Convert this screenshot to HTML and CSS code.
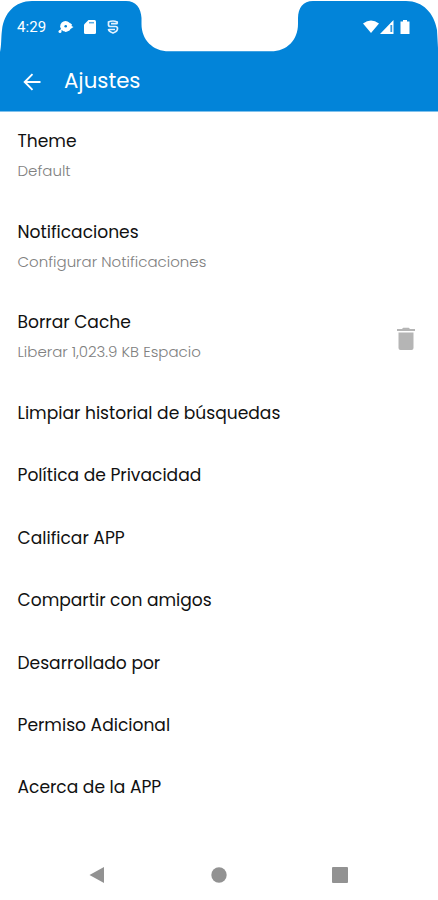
FILE: index.html
```html
<!DOCTYPE html>
<html lang="es">
<head>
<meta charset="utf-8">
<title>Ajustes</title>
<link rel="stylesheet" href="styles.css">
</head>
<body>
<header class="header">
  <svg class="header-shape" viewBox="0 0 438 112" aria-hidden="true"><path fill="#0284d9" d="M0 111.500V52C1.500 46 1 37 2 30C4 13 15 1 32 1H126C136 1 141 8 141.500 18V24C141.500 40 153 51.300 169 51.300H271C287 51.300 298 40 298 24V18C298 8 303 1 313 1H406C423 1 434 13 437 30L438 48V111.500Z"/></svg>
  <div class="status">
    <span class="time">4:29</span>
    <svg class="st-bug" viewBox="0 0 16 14"><path fill="#fff" d="M3 7L12 3 14 4.500 13.500 6 15.500 7 12.500 9 11.500 10.500 7.500 12Z"/><circle cx="7.500" cy="6.300" r="5.300" fill="#fff"/><circle cx="2" cy="11.500" r="1.500" fill="#fff"/><path stroke="#fff" stroke-width="1.500" d="M2 11L4 9"/><circle cx="7.700" cy="6.300" r="1.300" fill="#0284d9"/></svg>
    <svg class="st-card" viewBox="0 0 12 14"><path fill="#fff" d="M4.500 0H10.500Q12 0 12 1.500V12.500Q12 14 10.500 14H1.500Q0 14 0 12.500V4.500Z"/><path stroke="#58ace6" stroke-width="1.500" d="M5 2.700H10"/></svg>
    <svg class="st-s" viewBox="0 0 12 14"><path fill="none" stroke="#e2f2ff" stroke-width="1.700" d="M10.200 3.700V2Q8 1 6 1Q3.500 1 1.500 2V5Q1.500 6.500 3.500 6.500H8.500Q10.500 6.500 10.500 8.500Q10.500 11.500 6 13Q1.500 11.500 1.500 9M4 3.700H10.500M1.500 9.500H8"/></svg>
    <svg class="st-right" viewBox="0 0 48 16"><path fill="#fff" d="M0 4.500Q8-1.500 16 4.500L8 14ZM30.500 1V15H17ZM40 1H44V2.500H46.500V15H37.500V2.500H40Z"/><path stroke="#3199e0" stroke-width="1.800" d="M28.300 6V13"/></svg>
  </div>
  <div class="bar">
    <svg class="back" viewBox="0 0 18 18"><path fill="none" stroke="#fff" stroke-width="1.900" d="M17.500 9H1.800M9.500 1.200L1.700 9L9.500 16.800"/></svg>
    <h1>Ajustes</h1>
  </div>
</header>
<main>
  <section class="row double"><div><h2>Theme</h2><p>Default</p></div></section>
  <section class="row double"><div><h2>Notificaciones</h2><p>Configurar Notificaciones</p></div></section>
  <section class="row double"><div><h2>Borrar Cache</h2><p>Liberar 1,023.9 KB Espacio</p></div>
    <svg class="trash" viewBox="0 0 18 23"><path fill="#b5b5b5" d="M0 2H5L6.200.7H11.800L13 2H18V4H0ZM1.500 5.500H16.500V21Q16.500 23 14.500 23H3.500Q1.500 23 1.500 21Z"/></svg></section>
  <section class="row"><h2>Limpiar historial de búsquedas</h2></section>
  <section class="row"><h2>Política de Privacidad</h2></section>
  <section class="row"><h2>Calificar APP</h2></section>
  <section class="row"><h2>Compartir con amigos</h2></section>
  <section class="row"><h2>Desarrollado por</h2></section>
  <section class="row"><h2>Permiso Adicional</h2></section>
  <section class="row"><h2>Acerca de la APP</h2></section>
</main>
<nav class="nav">
  <svg viewBox="0 0 16 18"><path fill="#929292" d="M15 1V17L.5 9Z"/></svg>
  <svg viewBox="0 0 16 18"><circle cx="8" cy="9" r="7.700" fill="#929292"/></svg>
  <svg viewBox="0 0 16 18"><rect y="1" width="16" height="16" rx="1" fill="#929292"/></svg>
</nav>
</body>
</html>
```
FILE: styles.css
```css
* { box-sizing: border-box; margin: 0; padding: 0; }
body { width: 438px; height: 900px; overflow: hidden; background: #fff; color: #111; font-family: Poppins, Inter, sans-serif; display: flex; flex-direction: column; }
svg { display: block; flex: none; }
.header { position: relative; height: 112px; flex: none; }
.header-shape { position: absolute; left: 0; top: 0; width: 438px; height: 112px; }
.status { position: relative; height: 53px; padding: 1px 27px 0 17px; display: flex; align-items: center; color: #fff; }
.time { width: 41px; font: 400 15px Roboto, sans-serif; letter-spacing: .1px; }
.st-bug { width: 16px; height: 14px; }
.st-card { width: 12px; height: 14px; margin-left: 9.500px; }
.st-s { width: 12px; height: 14px; margin-left: 11.500px; }
.st-right { width: 48px; height: 16px; margin-left: auto; }
.bar { position: relative; height: 59px; padding: 0 0 4px 23px; display: flex; align-items: center; gap: 23px; color: #fff; }
.back { width: 18px; height: 18px; margin-top: 3px; }
h1 { font-size: 21.300px; font-weight: 400; line-height: 30px; }
main { flex: 1; margin-top: -2px; }
.row { height: 62.400px; padding: 0 23px 0 17.500px; display: flex; align-items: center; justify-content: space-between; }
.double { height: 90.600px; align-items: flex-start; padding-top: 16.200px; }
h2 { font-size: 17.100px; font-weight: 400; line-height: 30px; white-space: nowrap; }
p { font-size: 15px; font-weight: 300; line-height: 30.400px; color: #808080; white-space: nowrap; }
.trash { width: 18px; height: 23px; margin-top: 19.500px; }
.nav { height: 50px; padding: 0 90px 0 89px; display: flex; align-items: center; justify-content: space-between; }
.nav svg { width: 16px; height: 18px; }
```
